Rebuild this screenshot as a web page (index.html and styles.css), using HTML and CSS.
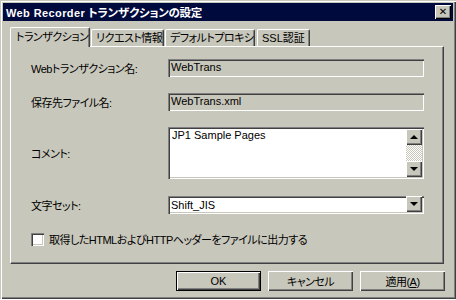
FILE: index.html
```html
<html lang="ja">
<head>
    <meta charset="UTF-8">
    <title>Web Recorder トランザクションの設定</title>
    <link rel="stylesheet" href="styles.css">
</head>
<body>
    <div class="window">
        <div class="titlebar">
            <span class="title"><span class="latin">Web Recorder</span> トランザクションの設定</span>
            <span class="close">&#x2715;</span>
        </div>
        <div class="tabs">
            <div class="tab active">トランザクション</div>
            <div class="tab">リクエスト情報</div>
            <div class="tab">デフォルトプロキシ</div>
            <div class="tab">SSL認証</div>
        </div>
        <div class="panel">
            <div class="row">
                <span class="label">Webトランザクション名:</span>
                <div class="field readonly">WebTrans</div>
            </div>
            <div class="row">
                <span class="label">保存先ファイル名:</span>
                <div class="field readonly">WebTrans.xml</div>
            </div>
            <div class="row">
                <span class="label">コメント:</span>
                <div class="memo">
                    <div class="memo-text">JP1 Sample Pages</div>
                    <div class="scrollbar">
                        <div class="sbtn"><span class="arrow up"></span></div>
                        <div class="track"></div>
                        <div class="sbtn"><span class="arrow down"></span></div>
                    </div>
                </div>
            </div>
            <div class="row select-row">
                <span class="label">文字セット:</span>
                <div class="select">
                    <div class="select-text">Shift_JIS</div>
                    <div class="sbtn"><span class="arrow down"></span></div>
                </div>
            </div>
            <div class="check-row">
                <span class="checkbox"></span>
                <span class="check-label">取得したHTMLおよびHTTPヘッダーをファイルに出力する</span>
            </div>
        </div>
        <div class="buttons">
            <button class="btn default">OK</button>
            <button class="btn">キャンセル</button>
            <button class="btn">適用(<u>A</u>)</button>
        </div>
    </div>
</body>
</html>
```

FILE: styles.css
```css
*{
    margin: 0; padding: 0;
    box-sizing: border-box;
}
body{
    width: 456px;
    height: 300px;
    overflow: hidden;
    font-family: "Liberation Sans", "Noto Sans CJK JP", sans-serif;
    font-size: 11px;
    letter-spacing: -0.5px;
    font-feature-settings: "palt";
    color: #000;
    white-space: nowrap;
}
.window{
    width: 456px;
    height: 299px;
    padding: 3px;
    background: #c8c7bb;
    box-shadow: inset 1px 1px #c8c7bb, inset 2px 2px #fff, inset -1px -1px #404040, inset -2px -2px #808080;
}
.titlebar{
    height: 18px;
    background: #000a3c;
    display: flex;
    align-items: center;
    justify-content: space-between;
    padding: 0 2px 0 3px;
}
.title{
    color: #fff;
    font-weight: bold;
    font-size: 11.5px;
    letter-spacing: -0.3px;
}
.title .latin{
    font-size: 11px;
    letter-spacing: 0.4px;
}
.close{
    width: 16px;
    height: 14px;
    background: #c8c7bb;
    box-shadow: inset 1px 1px #fff, inset -1px -1px #000, inset -2px -2px #808080;
    display: flex;
    align-items: center;
    justify-content: center;
    font-family: "DejaVu Sans", sans-serif;
    font-size: 10px;
    font-weight: bold;
    letter-spacing: 0;
    line-height: 1;
}

/* tabs */
.tabs{
    display: flex;
    align-items: flex-end;
    height: 19px;
    margin-top: 6px;
    padding-left: 7px;
}
.tab{
    height: 17px;
    padding: 0 4px;
    line-height: 16px;
    background: #c8c7bb;
    border-left: 1px solid #fff;
    border-top: 1px solid #fff;
    border-right: 1px solid #404040;
    box-shadow: inset -1px 0 #808080;
    border-radius: 2px 2px 0 0;
    margin-right: 1px;
    overflow: hidden;
}
.tab.active{
    position: relative;
    z-index: 1;
    height: 20px;
    margin-bottom: -1px;
    width: 80px;
    padding-left: 5px;
    line-height: 18px;
}
.tab:nth-child(2){ width: 73px; }
.tab:nth-child(3){ width: 90px; }
.tab:nth-child(4){ width: 53px; margin-left: 1px; letter-spacing: 0; }

.panel{
    margin-left: 7px;
    width: 434px;
    height: 218px;
    border-left: 1px solid #fff;
    border-top: 1px solid #fff;
    border-right: 1px solid #404040;
    border-bottom: 1px solid #404040;
    box-shadow: inset -1px -1px #808080;
    padding: 12px 0 0 20px;
    display: flex;
    flex-direction: column;
    gap: 16px;
}
.row{
    display: flex;
    align-items: center;
}
.label{
    width: 137px;
}
.field{
    width: 256px;
    height: 18px;
    padding: 0 3px;
    line-height: 17px;
    letter-spacing: 0;
    box-shadow: inset 1px 1px #808080, inset 2px 2px #404040, inset -1px -1px #fff, inset -2px -2px #c8c7bb;
}
.field.readonly{
    background: #c8c7bb;
}

/* comment box */
.memo{
    width: 256px;
    height: 52px;
    display: flex;
    background: #fff;
    padding: 2px;
    box-shadow: inset 1px 1px #808080, inset 2px 2px #404040, inset -1px -1px #fff, inset -2px -2px #c8c7bb;
}
.memo-text{
    flex: 1;
    padding: 0 2px;
    letter-spacing: 0;
    line-height: 13px;
}
.scrollbar{
    width: 16px;
    display: flex;
    flex-direction: column;
}
.track{
    flex: 1;
    background: repeating-conic-gradient(#c8c7bb 0 25%, #fff 0 50%) 0 0 / 2px 2px;
}
.sbtn{
    width: 16px;
    height: 16px;
    background: #c8c7bb;
    box-shadow: inset 1px 1px #fff, inset -1px -1px #404040, inset -2px -2px #808080;
    display: flex;
    align-items: center;
    justify-content: center;
}
.arrow{
    width: 0;
    height: 0;
    border-left: 4px solid transparent;
    border-right: 4px solid transparent;
}
.arrow.up{ border-bottom: 4px solid #000; }
.arrow.down{ border-top: 4px solid #000; }

/* select */
.select-row{
    margin-top: 1px;
}
.select{
    width: 256px;
    height: 18px;
    display: flex;
    background: #fff;
    padding: 1px 2px;
    box-shadow: inset 1px 1px #808080, inset 2px 2px #404040, inset -1px -1px #fff, inset -2px -2px #c8c7bb;
}
.select-text{
    flex: 1;
    padding: 0 1px;
    line-height: 16px;
    letter-spacing: 0;
}
.select .sbtn{
    margin-top: -1px;
}

.check-row{
    display: flex;
    align-items: center;
    margin-top: 1px;
}
.checkbox{
    width: 13px;
    height: 13px;
    background: #fff;
    box-shadow: inset 1px 1px #808080, inset 2px 2px #404040, inset -1px -1px #fff, inset -2px -2px #c8c7bb;
    margin-right: 5px;
}

/* buttons */
.buttons{
    display: flex;
    justify-content: flex-end;
    gap: 7px;
    margin-top: 7px;
    padding-right: 8px;
}
.btn{
    width: 85px;
    height: 20px;
    border: none;
    background: #c8c7bb;
    font-family: "Liberation Sans", "Noto Sans CJK JP", sans-serif;
    font-size: 11px;
    letter-spacing: -0.5px;
    font-feature-settings: "palt";
    box-shadow: inset 1px 1px #fff, inset -1px -1px #404040, inset -2px -2px #808080;
}
.btn.default{
    letter-spacing: 0;
    box-shadow: inset 0 0 0 1px #000, inset 2px 2px #fff, inset -2px -2px #404040, inset -3px -3px #808080;
}
```
